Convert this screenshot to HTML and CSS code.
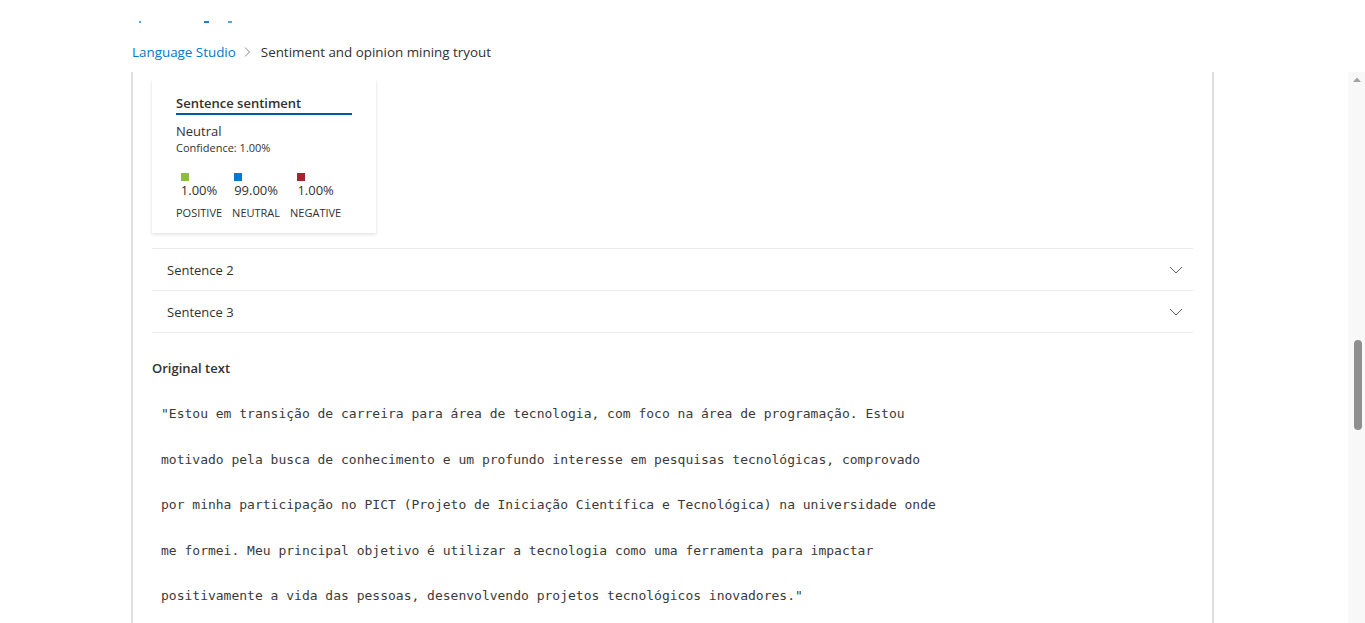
FILE: index.html
```html
<!DOCTYPE html>
<html lang="en">
<head>
<meta charset="utf-8">
<title>Sentiment and opinion mining tryout</title>
<link rel="stylesheet" href="styles.css">
</head>
<body>
<div class="top-strip">
  <span class="frag f1"></span><span class="frag f2"></span><span class="frag f3"></span>
</div>
<nav class="breadcrumb">
  <a class="crumb-link" href="#">Language Studio</a>
  <svg class="crumb-sep" width="8" height="12" viewBox="0 0 8 12"><path d="M2 1.5 L6.5 6 L2 10.5" fill="none" stroke="#8a8886" stroke-width="1"/></svg>
  <span class="crumb-current">Sentiment and opinion mining tryout</span>
</nav>
<div class="body-row">
  <div class="gutter"></div>
  <main class="panel">
    <section class="card">
      <div class="card-title">Sentence sentiment</div>
      <div class="sentiment">Neutral</div>
      <div class="confidence">Confidence: 1.00%</div>
      <div class="scores">
        <div class="score">
          <div class="score-top"><span class="sq sq-pos"></span><span class="pct">1.00%</span></div>
          <span class="lbl">POSITIVE</span>
        </div>
        <div class="score">
          <div class="score-top"><span class="sq sq-neu"></span><span class="pct">99.00%</span></div>
          <span class="lbl">NEUTRAL</span>
        </div>
        <div class="score">
          <div class="score-top"><span class="sq sq-neg"></span><span class="pct">1.00%</span></div>
          <span class="lbl">NEGATIVE</span>
        </div>
      </div>
    </section>
    <div class="rows">
      <div class="row"><span>Sentence 2</span>
        <svg class="chev" width="14" height="8" viewBox="0 0 14 8"><path d="M1 1 L7 7 L13 1" fill="none" stroke="#605e5c" stroke-width="1"/></svg>
      </div>
      <div class="row"><span>Sentence 3</span>
        <svg class="chev" width="14" height="8" viewBox="0 0 14 8"><path d="M1 1 L7 7 L13 1" fill="none" stroke="#605e5c" stroke-width="1"/></svg>
      </div>
    </div>
    <h3 class="orig-title">Original text</h3>
    <div class="orig-text">
      <div>"Estou em transição de carreira para área de tecnologia, com foco na área de programação. Estou</div>
      <div>motivado pela busca de conhecimento e um profundo interesse em pesquisas tecnológicas, comprovado</div>
      <div>por minha participação no PICT (Projeto de Iniciação Científica e Tecnológica) na universidade onde</div>
      <div>me formei. Meu principal objetivo é utilizar a tecnologia como uma ferramenta para impactar</div>
      <div>positivamente a vida das pessoas, desenvolvendo projetos tecnológicos inovadores."</div>
    </div>
  </main>
  <div class="spacer"></div>
  <div class="scrollbar">
    <svg class="sb-arrow" width="8" height="6" viewBox="0 0 8 6"><path d="M0 5 L4 0.5 L8 5 Z" fill="#a3a3a3"/></svg>
    <div class="sb-thumb"></div>
  </div>
</div>
</body>
</html>
```

FILE: styles.css
```css
* { box-sizing: border-box; }
html, body { margin: 0; padding: 0; background: #ffffff; overflow: hidden; }
body {
  font-family: "Segoe UI", "Open Sans", "Liberation Sans", sans-serif;
  color: #323130;
  width: 1365px;
  height: 623px;
}
.top-strip {
  height: 40px;
  position: relative;
}
.frag {
  position: absolute;
  top: 21px;
  height: 2px;
  background: #5aa0e6;
}
.f1 { left: 139px; width: 2px; }
.f2 { left: 204px; width: 5px; background: #1b7fe0; }
.f3 { left: 228px; width: 4px; }

.breadcrumb {
  height: 24px;
  display: flex;
  align-items: center;
  padding-left: 132px;
  font-size: 13.4px;
}
.crumb-link { color: #0078d4; text-decoration: none; }
.crumb-sep { margin: 0 10px 0 7px; }
.crumb-current { color: #323130; }

.body-row {
  display: flex;
  height: 559px;
  margin-top: 8px;
}
.gutter { width: 131px; flex: none; }
.panel {
  width: 1083px;
  flex: none;
  border-left: 2px solid #e1dfdd;
  border-right: 2px solid #e1dfdd;
  padding: 0 19px;
  overflow: hidden;
}
.spacer { flex: 1; }
.scrollbar {
  width: 17px;
  flex: none;
  background: #f8f8f8;
  display: flex;
  flex-direction: column;
  align-items: center;
  position: relative;
}
.sb-arrow { margin-top: 5px; }
.sb-thumb {
  position: absolute;
  top: 268px;
  left: 6px;
  width: 8px;
  height: 90px;
  border-radius: 4px;
  background: #8f8f8f;
}

.card {
  width: 224px;
  margin-top: 7px;
  padding: 15px 24px 12px 24px;
  background: #fff;
  box-shadow: 0 1.6px 3.6px rgba(0,0,0,0.13), 0 0.3px 0.9px rgba(0,0,0,0.11);
}
.card-title {
  font-size: 13px;
  font-weight: 600;
  line-height: 18px;
  padding-bottom: 1px;
  border-bottom: 2px solid #005a9e;
}
.sentiment {
  font-size: 13px;
  line-height: 18px;
  margin-top: 7px;
}
.confidence {
  font-size: 11px;
  line-height: 16px;
}
.scores {
  display: flex;
  gap: 10px;
  margin-top: 17px;
}
.score {
  display: flex;
  flex-direction: column;
  align-items: center;
}
.score-top { display: flex; flex-direction: column; align-items: flex-start; }
.sq { width: 8px; height: 8px; display: block; }
.sq-pos { background: #8cbd3f; }
.sq-neu { background: #0078d4; }
.sq-neg { background: #a4262c; }
.pct { font-size: 13px; line-height: 18px; }
.lbl { font-size: 11px; line-height: 16px; margin-top: 6px; }

.rows { margin-top: 15px; }
.row {
  height: 42px;
  border-top: 1px solid #edebe9;
  display: flex;
  align-items: center;
  justify-content: space-between;
  padding: 1px 10px 0 15px;
  font-size: 13px;
}
.row:last-child { border-bottom: 1px solid #edebe9; height: 43px; }

.orig-title {
  margin: 25px 0 0 0;
  font-size: 13px;
  font-weight: 600;
  line-height: 20px;
}
.orig-text {
  margin-top: 13px;
  padding-left: 9px;
  font-family: "DejaVu Sans Mono", "Liberation Mono", monospace;
  font-size: 13px;
  line-height: 45.5px;
  color: #3b3a39;
  white-space: nowrap;
}
```
